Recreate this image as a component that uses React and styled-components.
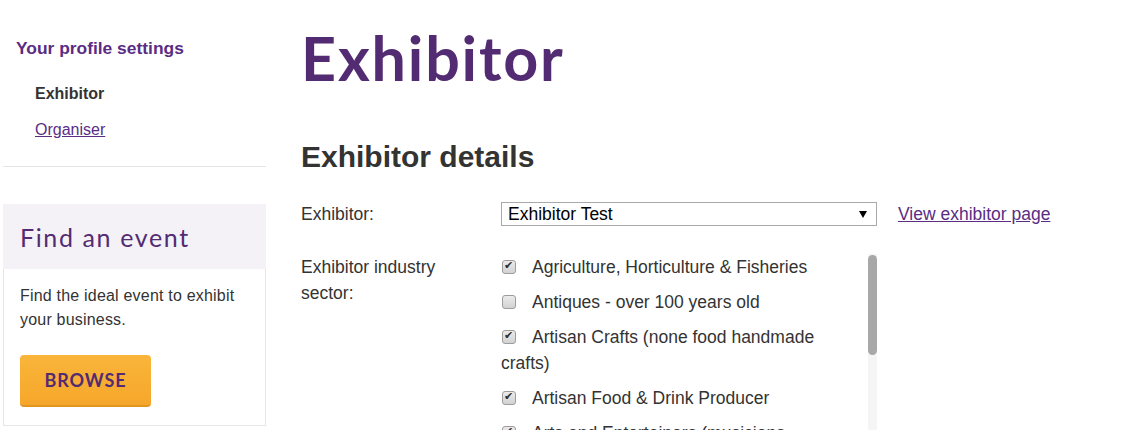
import React from "react";
import styled, { createGlobalStyle } from "styled-components";

const GlobalStyle = createGlobalStyle`
  html, body {
    margin: 0;
    padding: 0;
    background: #fff;
    overflow: hidden;
  }
  body {
    font-family: "Liberation Sans", Arial, sans-serif;
    color: #333;
  }
`;

const purple = "#532b72";

const Page = styled.div`
  display: flex;
  align-items: flex-start;
  padding-left: 3px;
`;

const Sidebar = styled.aside`
  width: 263px;
  flex-shrink: 0;
`;

const NavBlock = styled.nav`
  padding: 36px 0 24px 13px;
  border-bottom: 1px solid #e5e5e5;
`;

const NavHeading = styled.h3`
  margin: 0 0 22px;
  font-size: 17.4px;
  line-height: 24px;
  font-weight: bold;
  color: #5a2c84;
`;

const NavList = styled.ul`
  list-style: none;
  margin: 0;
  padding: 0 0 0 19px;
  display: flex;
  flex-direction: column;
  gap: 12px;
`;

const NavItem = styled.li`
  font-size: 16px;
  line-height: 24px;
  font-weight: ${(p) => (p.$active ? "bold" : "normal")};
  color: #333;

  a {
    color: #5a2c84;
    text-decoration: underline;
  }
`;

const EventBox = styled.section`
  margin-top: 37px;
`;

const EventHeader = styled.div`
  height: 65px;
  display: flex;
  align-items: center;
  padding: 0 17px;
  background: #f4f2f7;
  font-family: Lato, "Open Sans", sans-serif;
  font-size: 25px;
  letter-spacing: 0.065em;
  color: ${purple};
  box-sizing: border-box;
`;

const EventBody = styled.div`
  border: 1px solid #e6e6e6;
  border-top: none;
  padding: 15px 16px 18px;
`;

const EventText = styled.p`
  margin: 0 0 23px;
  font-size: 16px;
  line-height: 24px;
  letter-spacing: 0.2px;
  color: #333;
`;

const BrowseButton = styled.button`
  width: 131px;
  height: 52px;
  border: none;
  border-bottom: 2px solid #e0951e;
  border-radius: 4px;
  background: linear-gradient(#f9b53a, #f6a72b);
  font-family: Lato, "Open Sans", sans-serif;
  font-weight: bold;
  font-size: 18px;
  letter-spacing: 0.05em;
  color: ${purple};
  cursor: pointer;
`;

const Main = styled.main`
  margin-left: 35px;
  flex: 1;
`;

const Title = styled.h1`
  margin: 27px 0 0;
  font-family: Lato, "Open Sans", sans-serif;
  font-weight: bold;
  font-size: 61px;
  line-height: 62px;
  letter-spacing: 0.03em;
  color: ${purple};
`;

const SubTitle = styled.h2`
  margin: 50px 0 0;
  font-size: 30px;
  line-height: 36px;
  font-weight: bold;
  color: #333;
`;

const FormRow = styled.div`
  display: grid;
  grid-template-columns: 200px 376px auto;
  align-items: ${(p) => (p.$top ? "start" : "center")};
  margin-top: ${(p) => p.$gap}px;
`;

const Label = styled.label`
  width: 170px;
  font-size: 17.5px;
  line-height: 26px;
  color: #333;
`;

const SelectWrap = styled.div`
  position: relative;
  height: 24px;

  &::after {
    content: "";
    position: absolute;
    right: 10px;
    top: 9px;
    border-left: 4px solid transparent;
    border-right: 4px solid transparent;
    border-top: 7px solid #000;
    pointer-events: none;
  }
`;

const Select = styled.select`
  appearance: none;
  width: 100%;
  height: 24px;
  box-sizing: border-box;
  border: 1px solid #a9a9a9;
  border-radius: 0;
  background: #fff;
  padding: 0 0 0 6px;
  font-family: "Liberation Sans", Arial, sans-serif;
  font-size: 17.5px;
  color: #000;
`;

const TextLink = styled.a`
  margin-left: 21px;
  font-size: 17.5px;
  color: #5a2c84;
  text-decoration: underline;
`;

const CheckPanel = styled.div`
  display: flex;
  height: 220px;
`;

const CheckList = styled.div`
  flex: 1;
  min-width: 0;
  padding-right: 12px;
  overflow: hidden;
`;

const ScrollTrack = styled.div`
  width: 9px;
  flex-shrink: 0;
  background: #f5f5f5;
`;

const ScrollThumb = styled.div`
  margin-top: 1px;
  height: 100px;
  border-radius: 5px;
  background: #a8a8a8;
`;

const CheckItem = styled.label`
  display: block;
  margin-bottom: 9px;
  font-size: 17.5px;
  line-height: 26px;
  color: #333;
`;

const Box = styled.input.attrs({ type: "checkbox" })`
  appearance: none;
  position: relative;
  display: inline-block;
  width: 14px;
  height: 14px;
  margin: 0 16px 0 1px;
  vertical-align: -1px;
  box-sizing: border-box;
  border: 1px solid #9c9c9c;
  border-radius: 3px;
  background: linear-gradient(#ebebeb, #d2d2d2);

  &:checked::after {
    content: "✔";
    position: absolute;
    left: 1px;
    top: -2px;
    font-family: "DejaVu Sans", sans-serif;
    font-size: 11px;
    line-height: 14px;
    color: #2e2e2e;
  }
`;

const sectors = [
  ["Agriculture, Horticulture & Fisheries", true],
  ["Antiques - over 100 years old", false],
  ["Artisan Crafts (none food handmade crafts)", true],
  ["Artisan Food & Drink Producer", true],
  ["Arts and Entertainers (musicians, performers, artists)", true],
  ["Beauty, Health & Wellbeing", false],
  ["Books, Cards & Stationery", false],
];

export default function App() {
  return (
    <>
      <GlobalStyle />
      <Page>
        <Sidebar>
          <NavBlock>
            <NavHeading>Your profile settings</NavHeading>
            <NavList>
              <NavItem $active>Exhibitor</NavItem>
              <NavItem>
                <a href="#organiser">Organiser</a>
              </NavItem>
            </NavList>
          </NavBlock>

          <EventBox>
            <EventHeader>Find an event</EventHeader>
            <EventBody>
              <EventText>Find the ideal event to exhibit your business.</EventText>
              <BrowseButton>BROWSE</BrowseButton>
            </EventBody>
          </EventBox>
        </Sidebar>

        <Main>
          <Title>Exhibitor</Title>
          <SubTitle>Exhibitor details</SubTitle>

          <FormRow $gap={26}>
            <Label>Exhibitor:</Label>
            <SelectWrap>
              <Select defaultValue="test">
                <option value="test">Exhibitor Test</option>
              </Select>
            </SelectWrap>
            <TextLink href="#view">View exhibitor page</TextLink>
          </FormRow>

          <FormRow $gap={27} $top>
            <Label>Exhibitor industry sector:</Label>
            <CheckPanel>
              <CheckList>
                {sectors.map(([name, on]) => (
                  <CheckItem key={name}>
                    <Box defaultChecked={on} />
                    {name}
                  </CheckItem>
                ))}
              </CheckList>
              <ScrollTrack>
                <ScrollThumb />
              </ScrollTrack>
            </CheckPanel>
          </FormRow>
        </Main>
      </Page>
    </>
  );
}
